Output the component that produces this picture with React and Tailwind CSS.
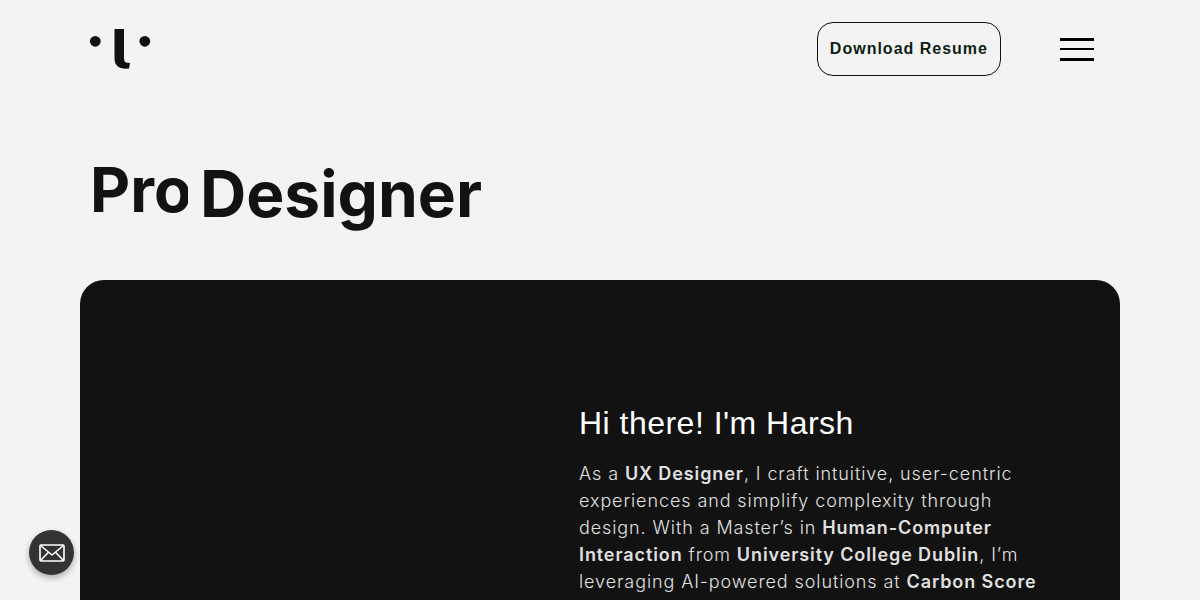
function Logo() {
  return (
    <svg viewBox="0 0 64 44" className="h-11 w-16" aria-hidden="true" fill="#111111">
      <circle cx="7.3" cy="14.3" r="5.4" />
      <circle cx="56.8" cy="14.3" r="5.4" />
      <path d="M26.5 2H36V31Q36 35.5 39 35.7L42 36L41 41.5Q26.5 43 26.5 31Z" />
    </svg>
  );
}

function Header() {
  return (
    <header className="flex items-center justify-between pt-[22px] pr-[26px] pl-2">
      <a href="#home" aria-label="Home">
        <Logo />
      </a>
      <div className="flex items-center gap-[59px]">
        <a
          href="#resume"
          className="flex h-[54px] items-center rounded-2xl border border-[#111111] px-3 text-base font-bold tracking-[1px] text-[#0d1f12]"
        >
          Download Resume
        </a>
        <button type="button" aria-label="Open menu" className="flex w-[34px] flex-col">
          <span className="h-[3px] w-full bg-black" />
          <span className="mt-[7px] h-[2px] w-full bg-black" />
          <span className="mt-2 h-[3px] w-full bg-black" />
        </button>
      </div>
    </header>
  );
}

export default function App() {
  return (
    <div className="h-screen overflow-hidden bg-[#f3f3f3] font-['Liberation_Sans',Arial,sans-serif] text-[#121212]">
      <div className="mx-auto max-w-[1200px] px-20">
        <Header />
        <h1 className="flex items-start gap-3 pt-[70px] pl-2 font-['Inter',sans-serif] text-[64px] leading-[88px] font-bold">
          <span className="w-[100px] overflow-hidden pl-[2px] text-[62px]">Pro</span>
          <span className="pt-1">Designer</span>
        </h1>
        <main className="mt-[42px] grid min-h-screen grid-cols-2 rounded-3xl bg-[#121212]">
          <section className="col-start-2 -ml-[21px] w-[480px] pt-[119px]">
            <h2 className="text-[32px] leading-12 tracking-[0.015em] text-white">Hi there! I'm Harsh</h2>
            <p className="mt-[13px] font-['Inter',sans-serif] text-lg leading-[27px] font-light tracking-wider text-[#e0e0e0] [&_strong]:font-semibold">
              As a <strong>UX Designer</strong>, I craft intuitive, user-centric
              <br />
              experiences and simplify complexity through
              <br />
              design. With a Master’s in <strong>Human-Computer</strong>
              <br />
              <strong>Interaction</strong> from <strong>University College Dublin</strong>, I’m
              <br />
              leveraging AI-powered solutions at <strong>Carbon Score</strong>
            </p>
          </section>
        </main>
      </div>
      <a
        href="#contact"
        aria-label="Send an email"
        className="fixed bottom-[25px] left-[29px] flex size-[45px] items-center justify-center rounded-full bg-[#333333] shadow-[0_3px_6px_rgba(0,0,0,0.3)]"
      >
        <svg viewBox="0 0 26 18" className="h-[18px] w-[26px]" fill="none" stroke="white" strokeWidth="1.6" strokeLinejoin="round">
          <rect x="1" y="1" width="24" height="16" rx="1" />
          <path d="M1.5 1.5L13 11L24.5 1.5M1.5 16.5L9.5 8.3M24.5 16.5L16.5 8.3" />
        </svg>
      </a>
    </div>
  );
}
